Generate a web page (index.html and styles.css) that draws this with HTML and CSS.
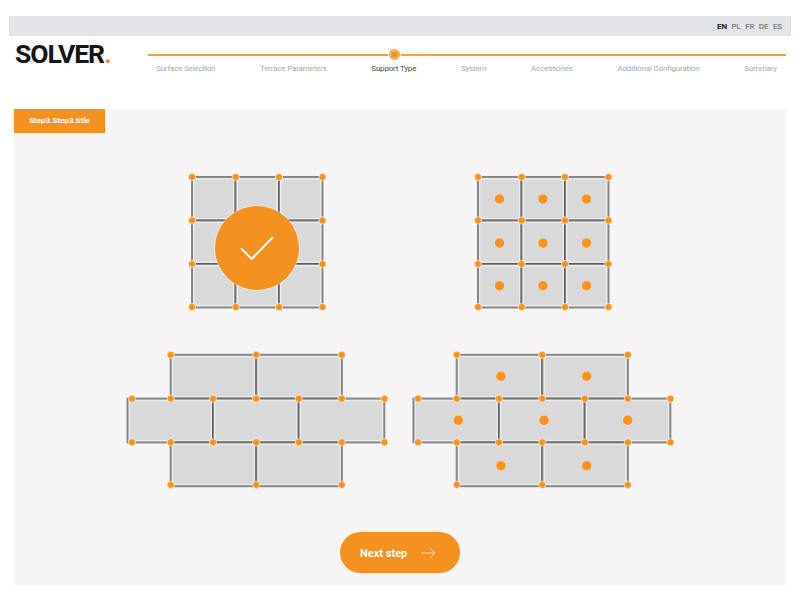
FILE: index.html
```html
<!DOCTYPE html>
<html lang="en">
<head>
    <meta charset="UTF-8">
    <meta name="viewport" content="width=device-width, initial-scale=1.0">
    <title>Solver</title>
    <link rel="stylesheet" href="styles.css">
</head>
<body>
    <!-- shared tile shapes -->
    <svg class="sprite">
        <defs>
            <g id="square">
                <rect class="tile" width="43.5" height="43.5"/>
                <rect class="tile-face" x="2.5" y="2.5" width="38.5" height="38.5"/>
            </g>
            <g id="brick">
                <rect class="tile" width="85.6" height="43.8"/>
                <rect class="tile-face" x="2.5" y="2.5" width="80.6" height="38.8"/>
            </g>
            <g id="square-grid">
                <use href="#square" x="5" y="5"/>
                <use href="#square" x="48.5" y="5"/>
                <use href="#square" x="92" y="5"/>
                <use href="#square" x="5" y="48.5"/>
                <use href="#square" x="48.5" y="48.5"/>
                <use href="#square" x="92" y="48.5"/>
                <use href="#square" x="5" y="92"/>
                <use href="#square" x="48.5" y="92"/>
                <use href="#square" x="92" y="92"/>
                <circle class="dot" cx="5" cy="5" r="3.6"/>
                <circle class="dot" cx="48.7" cy="5" r="3.6"/>
                <circle class="dot" cx="92" cy="5" r="3.6"/>
                <circle class="dot" cx="135.5" cy="5" r="3.6"/>
                <circle class="dot" cx="5" cy="48.4" r="3.6"/>
                <circle class="dot" cx="48.7" cy="48.4" r="3.6"/>
                <circle class="dot" cx="92" cy="48.4" r="3.6"/>
                <circle class="dot" cx="135.5" cy="48.4" r="3.6"/>
                <circle class="dot" cx="5" cy="92" r="3.6"/>
                <circle class="dot" cx="48.7" cy="92" r="3.6"/>
                <circle class="dot" cx="92" cy="92" r="3.6"/>
                <circle class="dot" cx="135.5" cy="92" r="3.6"/>
                <circle class="dot" cx="5" cy="135" r="3.6"/>
                <circle class="dot" cx="48.7" cy="135" r="3.6"/>
                <circle class="dot" cx="92" cy="135" r="3.6"/>
                <circle class="dot" cx="135.5" cy="135" r="3.6"/>
            </g>
            <g id="brick-wall">
                <use href="#brick" x="48.7" y="4.8"/>
                <use href="#brick" x="134.3" y="4.8"/>
                <use href="#brick" x="5.5" y="48.6"/>
                <use href="#brick" x="91" y="48.6"/>
                <use href="#brick" x="176.7" y="48.6"/>
                <use href="#brick" x="48.7" y="92.4"/>
                <use href="#brick" x="134.3" y="92.4"/>
                <circle class="dot" cx="48.7" cy="4.8" r="3.6"/>
                <circle class="dot" cx="134.2" cy="4.8" r="3.6"/>
                <circle class="dot" cx="219.8" cy="4.8" r="3.6"/>
                <circle class="dot" cx="10" cy="48.7" r="3.6"/>
                <circle class="dot" cx="48.7" cy="48.7" r="3.6"/>
                <circle class="dot" cx="91" cy="48.7" r="3.6"/>
                <circle class="dot" cx="134.2" cy="48.7" r="3.6"/>
                <circle class="dot" cx="176.8" cy="48.7" r="3.6"/>
                <circle class="dot" cx="219.8" cy="48.7" r="3.6"/>
                <circle class="dot" cx="262.5" cy="48.7" r="3.6"/>
                <circle class="dot" cx="10" cy="92.3" r="3.6"/>
                <circle class="dot" cx="48.7" cy="92.3" r="3.6"/>
                <circle class="dot" cx="91" cy="92.3" r="3.6"/>
                <circle class="dot" cx="134.2" cy="92.3" r="3.6"/>
                <circle class="dot" cx="176.8" cy="92.3" r="3.6"/>
                <circle class="dot" cx="219.8" cy="92.3" r="3.6"/>
                <circle class="dot" cx="262.5" cy="92.3" r="3.6"/>
                <circle class="dot" cx="48.7" cy="134.8" r="3.6"/>
                <circle class="dot" cx="134.2" cy="134.8" r="3.6"/>
                <circle class="dot" cx="219.8" cy="134.8" r="3.6"/>
            </g>
        </defs>
    </svg>

    <div class="page">
        <div class="top-bar">
            <a class="lang lang-active">EN</a>
            <a class="lang">PL</a>
            <a class="lang">FR</a>
            <a class="lang">DE</a>
            <a class="lang">ES</a>
        </div>

        <header class="header">
            <div class="logo">SOLVER<span class="logo-dot">.</span></div>
            <div class="stepper">
                <span class="step">Surface Selection</span>
                <span class="step">Terrace Parameters</span>
                <span class="step step-active">Support Type</span>
                <span class="step">System</span>
                <span class="step">Accessories</span>
                <span class="step">Additional Configuration</span>
                <span class="step">Summary</span>
            </div>
        </header>

        <main class="panel">
            <div class="panel-tag">Step3.Step3.title</div>

            <div class="options">
                <div class="option option-selected">
                    <svg class="pattern" width="140" height="140" viewBox="0 0 140 140">
                        <use href="#square-grid"/>
                    </svg>
                    <div class="check-badge">
                        <svg width="34" height="24" viewBox="0 0 34 24">
                            <path class="check-mark" d="M1.7 13 L11.7 23 L32.3 1.7"/>
                        </svg>
                    </div>
                </div>

                <div class="option">
                    <svg class="pattern" width="140" height="140" viewBox="0 0 140 140">
                        <use href="#square-grid"/>
                        <circle class="pin" cx="26.5" cy="27" r="5"/>
                        <circle class="pin" cx="70" cy="27" r="5"/>
                        <circle class="pin" cx="113.5" cy="27" r="5"/>
                        <circle class="pin" cx="26.5" cy="71" r="5"/>
                        <circle class="pin" cx="70" cy="71" r="5"/>
                        <circle class="pin" cx="113.5" cy="71" r="5"/>
                        <circle class="pin" cx="26.5" cy="113.7" r="5"/>
                        <circle class="pin" cx="70" cy="113.7" r="5"/>
                        <circle class="pin" cx="113.5" cy="113.7" r="5"/>
                    </svg>
                </div>

                <div class="option">
                    <svg class="pattern" width="270" height="140" viewBox="0 0 270 140">
                        <use href="#brick-wall"/>
                    </svg>
                </div>

                <div class="option">
                    <svg class="pattern" width="270" height="140" viewBox="0 0 270 140">
                        <use href="#brick-wall"/>
                        <circle class="pin" cx="93" cy="26.3" r="5"/>
                        <circle class="pin" cx="178.7" cy="26.3" r="5"/>
                        <circle class="pin" cx="50.3" cy="70.3" r="5"/>
                        <circle class="pin" cx="136" cy="70.3" r="5"/>
                        <circle class="pin" cx="219.7" cy="70.3" r="5"/>
                        <circle class="pin" cx="93" cy="115.7" r="5"/>
                        <circle class="pin" cx="178.7" cy="115.7" r="5"/>
                    </svg>
                </div>
            </div>

            <div class="actions">
                <button class="next-button">
                    Next step
                    <svg width="15" height="10" viewBox="0 0 15 10">
                        <path class="next-arrow" d="M0 5 H14 M9.5 0.5 L14 5 L9.5 9.5"/>
                    </svg>
                </button>
            </div>
        </main>
    </div>
</body>
</html>
```

FILE: styles.css
```css
body {
    margin: 0;
    background-color: #ffffff;
    font-family: 'Roboto', 'Liberation Sans', sans-serif;
}
.sprite {
    display: none;
}
.page {
    padding: 16px 9px 15px;
}
.top-bar {
    display: flex;
    justify-content: flex-end;
    align-items: center;
    gap: 4.5px;
    height: 20px;
    padding-right: 9px;
    background-color: #e3e4e8;
}
.lang {
    font-size: 8px;
    letter-spacing: -0.1px;
    color: #5c5f66;
}
.lang-active {
    font-weight: 700;
    color: #1c1c1e;
}
.header {
    display: flex;
    height: 73px;
    padding: 0 5px 0 6px;
    box-sizing: border-box;
}
.logo {
    width: 133px;
    padding-top: 3px;
    font-size: 26.5px;
    line-height: 30px;
    font-weight: 700;
    letter-spacing: -1.1px;
    color: #151515;
}
.logo-dot {
    color: #f5921f;
}
.stepper {
    display: flex;
    justify-content: space-between;
    flex: 1;
    height: 24px;
    margin-top: 18px;
    padding: 8px 9px 0 8px;
    border-top: 2px solid #f5a03f;
    box-sizing: border-box;
}
.step {
    font-size: 8px;
    line-height: 10px;
    letter-spacing: -0.18px;
    color: #a9a9ab;
}
.step-active {
    position: relative;
    color: #4a4a50;
}
.step-active::before {
    content: "";
    position: absolute;
    top: -15px;
    left: 50%;
    width: 9px;
    height: 9px;
    margin-left: -5px;
    background-color: #f5921f;
    border: 1px solid #f5921f;
    border-radius: 50%;
    box-shadow: inset 0 0 0 1px #fbd9ae;
    outline: 1px solid #ffffff;
    outline-offset: 0;
}
.panel {
    margin: 0 5px;
    height: 476px;
    background-color: #f6f4f5;
}
.panel-tag {
    width: 91px;
    height: 24px;
    font-size: 8px;
    font-weight: 700;
    line-height: 24px;
    text-align: center;
    color: #ffffff;
    background-color: #f5921f;
}
.options {
    display: grid;
    grid-template-columns: 286px 286px;
    justify-content: center;
    row-gap: 38px;
    padding-top: 39px;
}
.option {
    position: relative;
    display: flex;
    justify-content: center;
}
.pattern {
    display: block;
    filter: blur(0.3px);
}
.tile {
    fill: #ececec;
    stroke: rgba(64, 64, 64, 0.6);
    stroke-width: 2;
}
.tile-face {
    fill: #d9d9d9;
}
.dot {
    fill: #f7931e;
    stroke: rgba(255, 255, 255, 0.6);
    stroke-width: 1;
}
.pin {
    fill: #f7931e;
    stroke: rgba(255, 255, 255, 0.35);
    stroke-width: 1;
}
.check-badge {
    position: absolute;
    top: 33.5px;
    left: 101px;
    display: flex;
    align-items: center;
    justify-content: center;
    width: 84px;
    height: 84px;
    background-color: #f5921f;
    border-radius: 50%;
    box-shadow: 0 0 0 1px rgba(255, 255, 255, 0.4);
}
.check-mark {
    fill: none;
    stroke: #ffffff;
    stroke-width: 2;
    stroke-linecap: round;
    stroke-linejoin: round;
}
.actions {
    display: flex;
    justify-content: center;
    margin-top: 42px;
}
.next-button {
    display: flex;
    align-items: center;
    gap: 14px;
    width: 120px;
    height: 41px;
    padding: 1px 0 0 20px;
    font-family: inherit;
    font-size: 11px;
    font-weight: 700;
    color: #ffffff;
    background-color: #f5921f;
    border: none;
    border-radius: 21px;
    cursor: pointer;
}
.next-arrow {
    fill: none;
    stroke: #fbd9ae;
    stroke-width: 1;
}
```
